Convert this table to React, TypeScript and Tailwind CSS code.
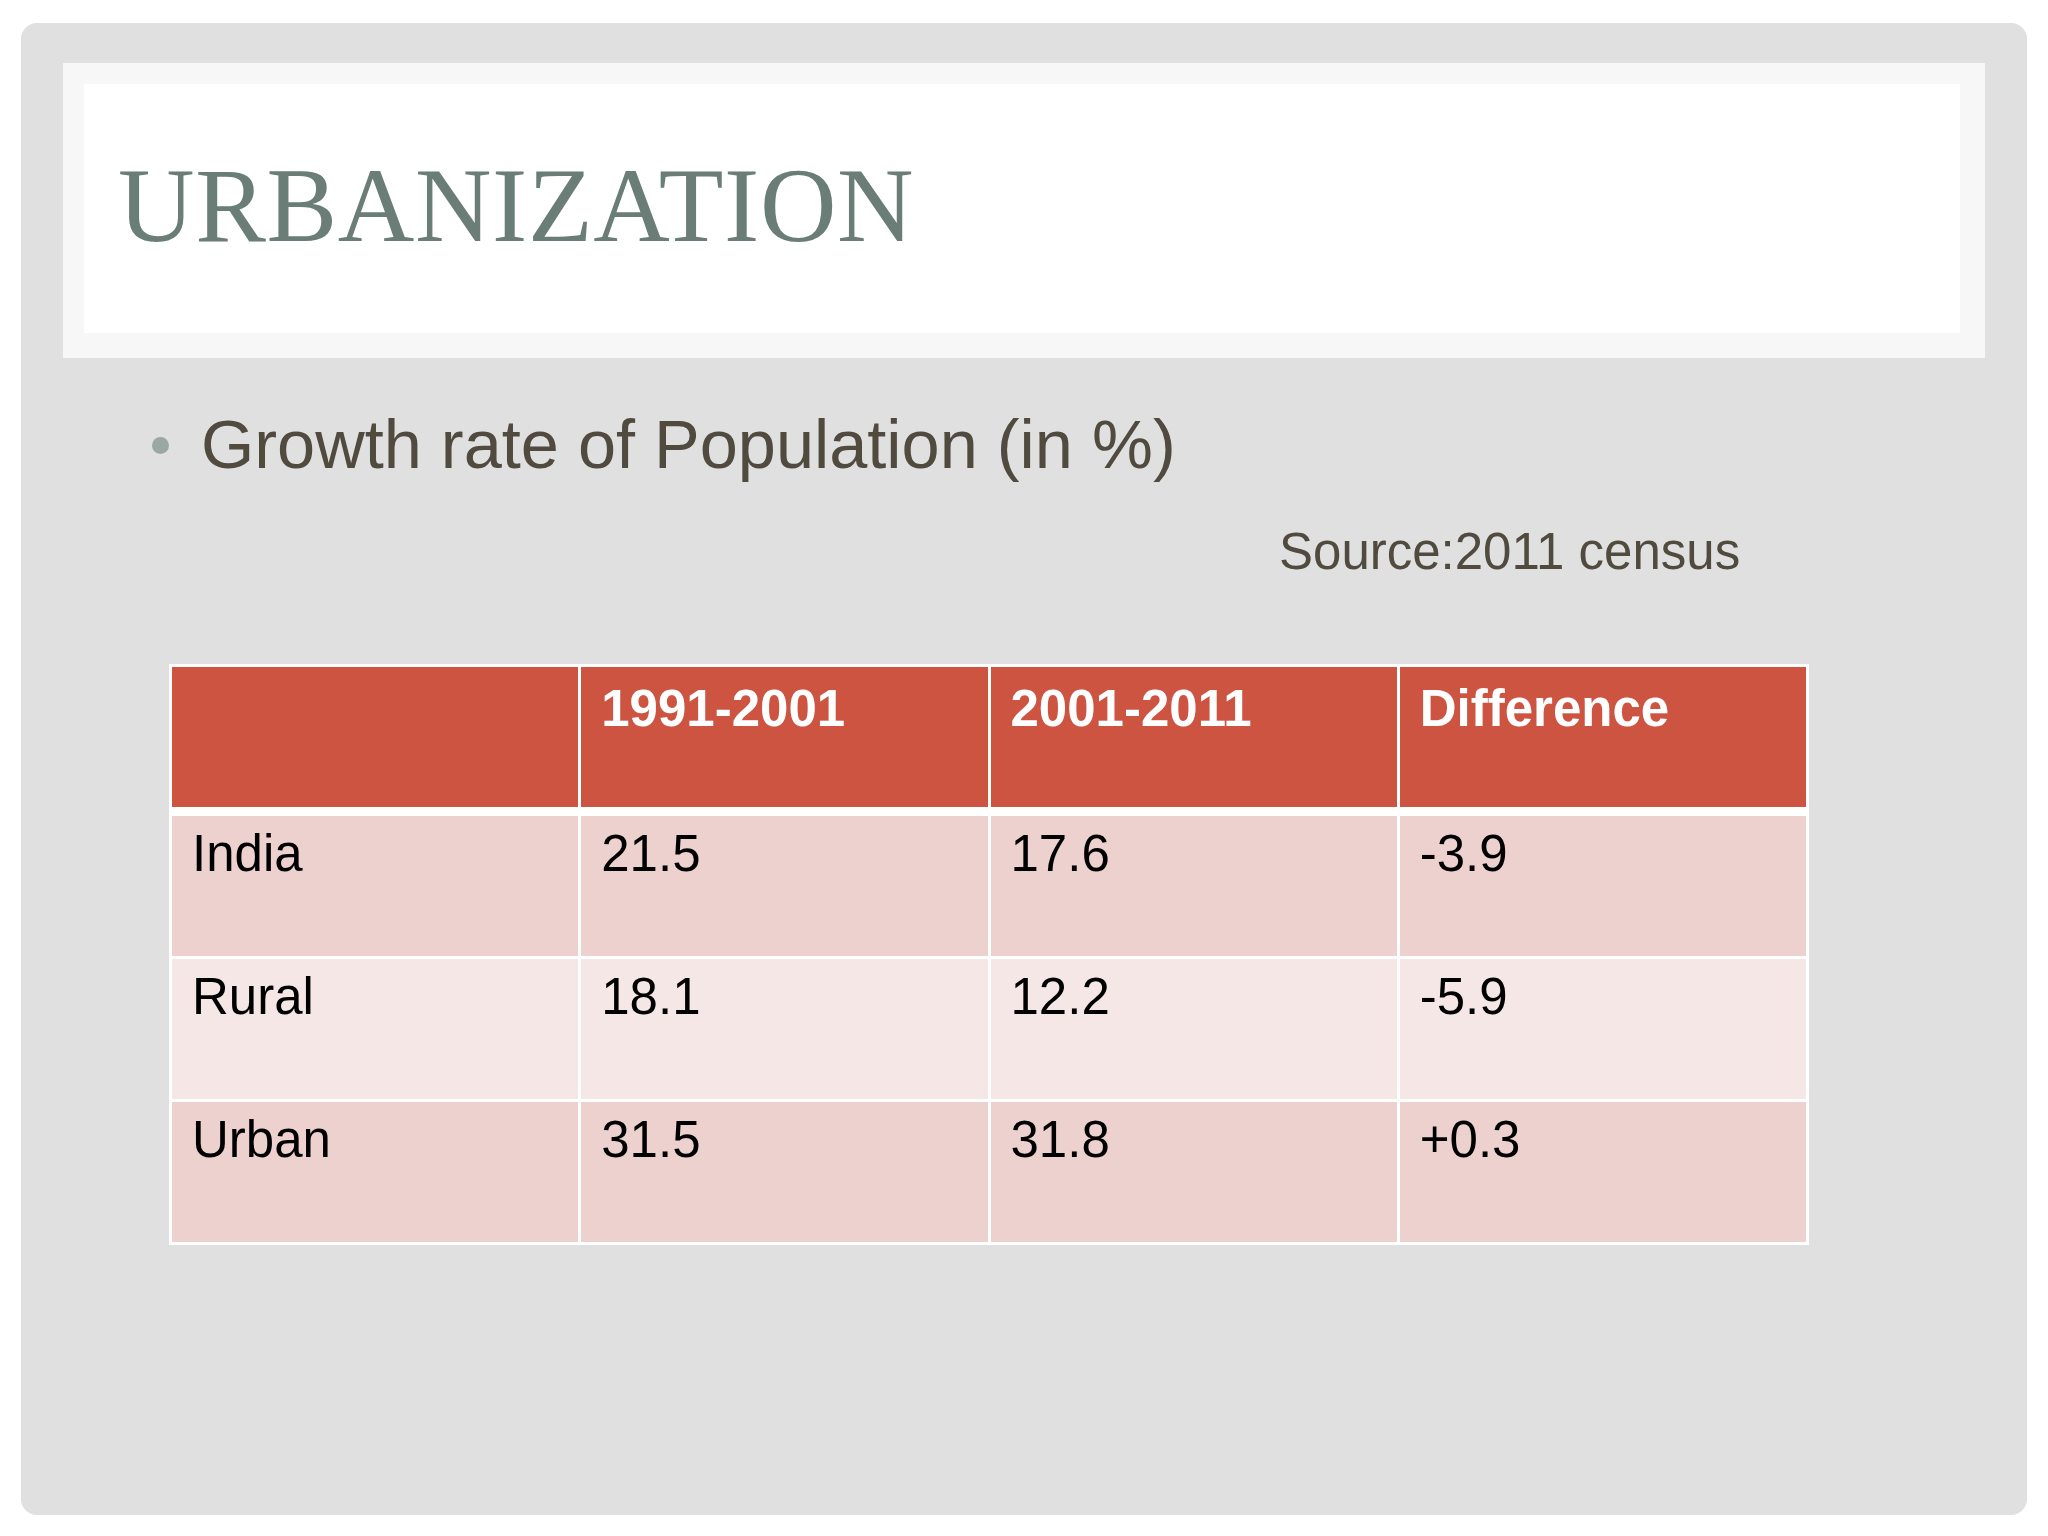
import React from "react";

const rows = [
  { label: "India", a: "21.5", b: "17.6", diff: "-3.9", bg: "bg-[#edd1ce]" },
  { label: "Rural", a: "18.1", b: "12.2", diff: "-5.9", bg: "bg-[#f5e7e6]" },
  { label: "Urban", a: "31.5", b: "31.8", diff: "+0.3", bg: "bg-[#edd1ce]" },
];

const headers = ["", "1991-2001", "2001-2011", "Difference"];

const App = () => {
  return (
    <div className="w-[2048px] h-[1536px] bg-white pt-[23px] pl-[21px] font-['Liberation_Sans',Arial,sans-serif]">
      <div className="w-[2006px] h-[1492px] rounded-[16px] bg-[#e0e0e0] pt-[40px]">
        {/* ===== Titre ===== */}
        <div className="ml-[42px] w-[1922px] h-[295px] bg-[#f7f7f7] pt-[21px] pl-[21px]">
          <div className="w-[1876px] h-[249px] bg-white pl-[34px] pt-[69px]">
            <h1 className="font-['Liberation_Serif','Times_New_Roman',serif] text-[106px] leading-none text-[#6a7d76] tracking-[0.6px]">
              URBANIZATION
            </h1>
          </div>
        </div>

        {/* ===== Puce ===== */}
        <div className="mt-[53px] ml-[131px] flex items-center gap-[32px]">
          <div className="w-[17px] h-[17px] rounded-full bg-[#9ba7a3]" />
          <p className="text-[68.5px] leading-none text-[#504a3f]">
            Growth rate of Population (in %)
          </p>
        </div>

        {/* ===== Source ===== */}
        <p className="mt-[46px] pl-[1258px] text-[51px] leading-none text-[#504a3f]">
          Source:2011 census
        </p>

        {/* ===== Tableau ===== */}
        <div className="mt-[87px] ml-[148px] w-[1640px] bg-white p-[3px] flex flex-col">
          <div className="grid grid-cols-4 gap-[3px]">
            {headers.map((h, i) => (
              <div
                key={i}
                className="h-[140px] bg-[#ce5442] px-[20px] pt-[16px] text-[51px] leading-none font-bold text-white"
              >
                {h}
              </div>
            ))}
          </div>
          <div className="mt-[9px] flex flex-col gap-[3px]">
            {rows.map((r) => (
              <div key={r.label} className="grid grid-cols-4 gap-[3px]">
                {[r.label, r.a, r.b, r.diff].map((v, i) => (
                  <div
                    key={i}
                    className={`h-[140px] ${r.bg} px-[20px] pt-[12px] text-[51px] leading-none text-black`}
                  >
                    {v}
                  </div>
                ))}
              </div>
            ))}
          </div>
        </div>
      </div>
    </div>
  );
};

export default App;
